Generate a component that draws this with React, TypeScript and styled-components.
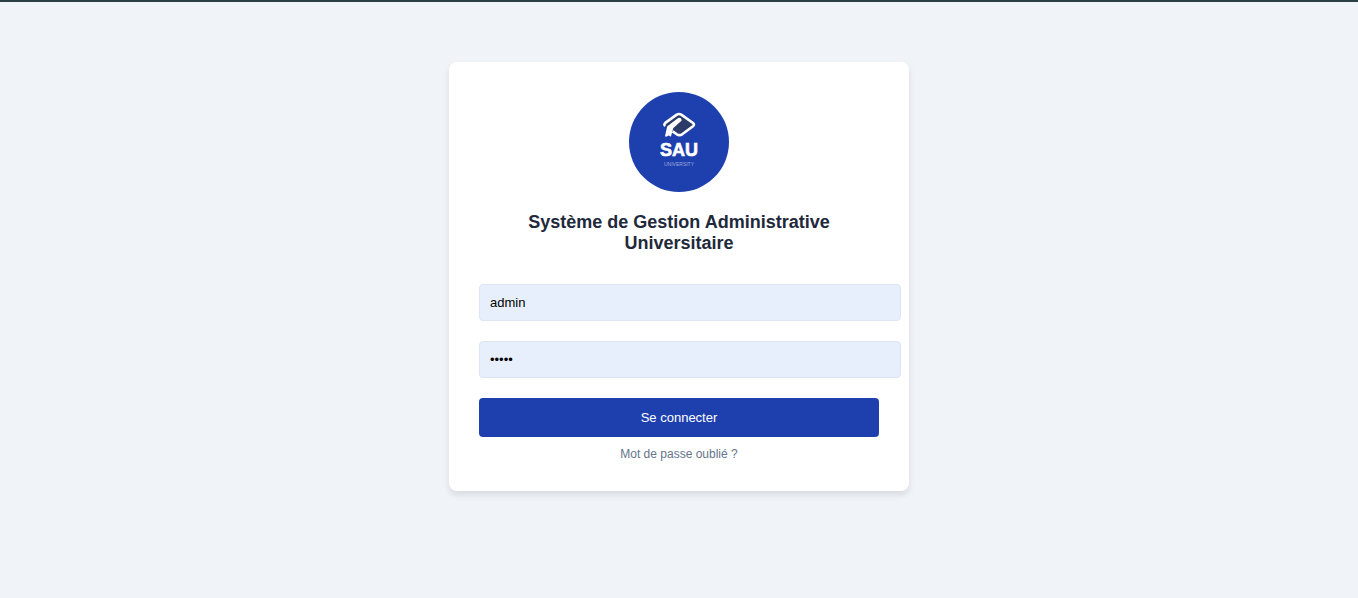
import React, { useState } from "react";
import styled, { createGlobalStyle } from "styled-components";

const GlobalStyle = createGlobalStyle`
  body {
    margin: 0;
    background: #f0f4f8;
    font-family: Arial, "Liberation Sans", sans-serif;
  }
`;

const Page = styled.div`
  min-height: 100vh;
  box-sizing: border-box;
  border-top: 2px solid #2a3f41;
  padding: 60px 20px;
`;

const Card = styled.main`
  max-width: 400px;
  margin: 0 auto;
  padding: 30px;
  background: #ffffff;
  border-radius: 8px;
  box-shadow: 0 4px 6px rgba(0, 0, 0, 0.1);
  text-align: center;
`;

const Logo = styled.svg`
  display: block;
  width: 100px;
  height: 100px;
  margin: 0 auto 20px;
`;

const Title = styled.h1`
  margin: 0 0 30px;
  color: #1e293b;
  font-size: 18px;
  line-height: 21px;
  font-weight: bold;
`;

const Form = styled.form`
  display: flex;
  flex-direction: column;
  gap: 20px;
`;

/* Content-box sizing: padding and border extend past the form column. */
const Field = styled.input`
  box-sizing: content-box;
  width: 100%;
  height: 15px;
  padding: 10px;
  border: 1px solid #dde5f0;
  border-radius: 4px;
  background: #e8effc;
  color: #000000;
  font-family: inherit;
  font-size: 13px;
  outline: none;

  &:focus {
    border-color: #1e40af;
  }
`;

const SubmitButton = styled.button`
  width: 100%;
  padding: 12px;
  border: 0;
  border-radius: 4px;
  background: #1e40af;
  color: #ffffff;
  font-family: inherit;
  font-size: 13px;
  line-height: 15px;
  cursor: pointer;
`;

const ForgotLink = styled.a`
  display: block;
  margin-top: 10px;
  color: #64748b;
  font-size: 12px;
  line-height: 14px;
  text-decoration: none;
`;

function UniversityLogo() {
  return (
    <Logo viewBox="0 0 100 100" role="img" aria-label="SAU University">
      <circle cx="50" cy="50" r="50" fill="#1e40af" />
      <path
        d="M36.3 34 Q34.4 32.4 36.3 30.9 L47.4 22.9 Q50 21.2 52.6 22.9 L64 31 Q66 32.6 64 34.2 L53.2 42.3 Q50.5 44 47.8 42.3 L43.6 39.4"
        fill="#2c3c68"
        stroke="#ffffff"
        strokeWidth="2.6"
        strokeLinejoin="round"
      />
      <path
        d="M49.6 26.6 Q51.6 26.2 52 28.2 L43.6 35.8 L41.4 43.8 L39.8 42.6 L36.8 44 L38.8 34.8 Z"
        fill="#ffffff"
        stroke="#ffffff"
        strokeWidth="1.4"
        strokeLinejoin="round"
      />
      <text
        x="50"
        y="64"
        textAnchor="middle"
        fill="#ffffff"
        stroke="#ffffff"
        strokeWidth="0.6"
        fontFamily="Arial, 'Liberation Sans', sans-serif"
        fontSize="18"
        fontWeight="bold"
      >
        SAU
      </text>
      <text
        x="50"
        y="74"
        textAnchor="middle"
        fill="#ffffff"
        fillOpacity="0.55"
        fontFamily="Arial, 'Liberation Sans', sans-serif"
        fontSize="5"
      >
        UNIVERSITY
      </text>
    </Logo>
  );
}

export default function App() {
  const [username, setUsername] = useState("admin");
  const [password, setPassword] = useState("admin");

  return (
    <>
      <GlobalStyle />
      <Page>
        <Card>
          <UniversityLogo />
          <Title>Système de Gestion Administrative Universitaire</Title>
          <Form onSubmit={(event) => event.preventDefault()}>
            <Field
              type="text"
              aria-label="Nom d'utilisateur"
              autoComplete="username"
              value={username}
              onChange={(event) => setUsername(event.target.value)}
            />
            <Field
              type="password"
              aria-label="Mot de passe"
              autoComplete="current-password"
              value={password}
              onChange={(event) => setPassword(event.target.value)}
            />
            <SubmitButton type="submit">Se connecter</SubmitButton>
          </Form>
          <ForgotLink href="#">Mot de passe oublié ?</ForgotLink>
        </Card>
      </Page>
    </>
  );
}
